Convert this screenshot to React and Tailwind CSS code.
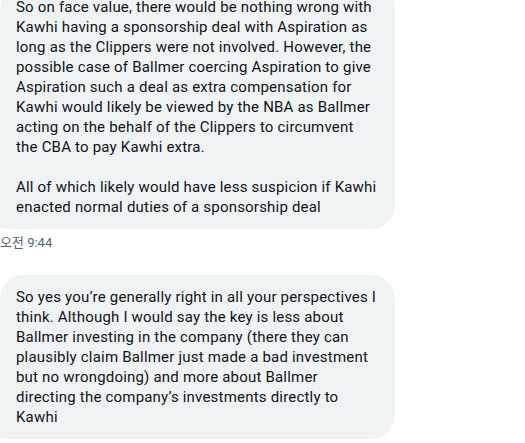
import React from "react";

const messages = [
  {
    id: 1,
    lines: [
      "So on face value, there would be nothing wrong with",
      "Kawhi having a sponsorship deal with Aspiration as",
      "long as the Clippers were not involved. However, the",
      "possible case of Ballmer coercing Aspiration to give",
      "Aspiration such a deal as extra compensation for",
      "Kawhi would likely be viewed by the NBA as Ballmer",
      "acting on the behalf of the Clippers to circumvent",
      "the CBA to pay Kawhi extra.",
      "",
      "All of which likely would have less suspicion if Kawhi",
      "enacted normal duties of a sponsorship deal",
    ],
    time: "오전 9:44",
  },
  {
    id: 2,
    lines: [
      "So yes you\u2019re generally right in all your perspectives I",
      "think. Although I would say the key is less about",
      "Ballmer investing in the company (there they can",
      "plausibly claim Ballmer just made a bad investment",
      "but no wrongdoing) and more about Ballmer",
      "directing the company\u2019s investments directly to",
      "Kawhi",
    ],
  },
];

const Bubble = ({ lines }) => (
  <div className="w-[395px] bg-[#eff3f4] rounded-3xl rounded-bl-[4px] px-4 py-3 text-[15px] leading-5 tracking-[0.2px] text-[#0f1419]">
    {lines.map((line, i) => (
      <div key={i} className="whitespace-nowrap h-5">
        {line}
      </div>
    ))}
  </div>
);

export default function App() {
  return (
    <div
      className="w-[525px] h-[443px] bg-white overflow-hidden"
      style={{ fontFamily: 'Roboto, "Noto Sans CJK KR", sans-serif' }}
    >
      <div className="-mt-[15px] flex flex-col">
        {messages.map((m) => (
          <div key={m.id} className="flex flex-col mb-[24px]">
            <Bubble lines={m.lines} />
            {m.time && (
              <div className="mt-[6px] text-[13px] leading-4 text-[#536471]">
                {m.time}
              </div>
            )}
          </div>
        ))}
      </div>
    </div>
  );
}
